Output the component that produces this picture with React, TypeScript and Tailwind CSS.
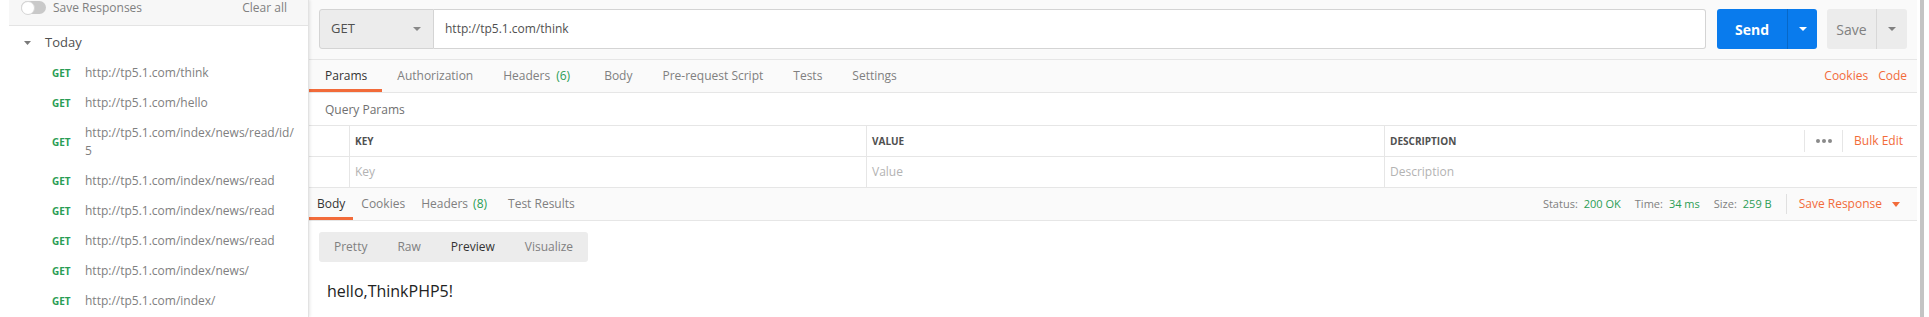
import React from "react";

const GREEN = "text-[#2a9d55]";

function Tri({ color = "#808080", w = 8, h = 4 }: { color?: string; w?: number; h?: number }) {
  return (
    <svg width={w} height={h} viewBox={`0 0 ${w} ${h}`} className="block">
      <polygon points={`0,0 ${w},0 ${w / 2},${h}`} fill={color} />
    </svg>
  );
}

function HistoryItem({ url, url2 }: { url: string; url2?: string }) {
  return (
    <div className="flex items-center pl-[43px] py-[6px]">
      <span className={`w-[33px] shrink-0 text-[10px] font-bold ${GREEN} leading-[18px]`}>GET</span>
      <span className="text-[12px] leading-[18px] text-[#808080]">
        {url}
        {url2 ? (
          <>
            <br />
            {url2}
          </>
        ) : null}
      </span>
    </div>
  );
}

export default function App() {
  return (
    <div className="flex h-[317px] w-[1929px] overflow-hidden bg-white font-['Open_Sans',sans-serif]">
      {/* Sidebar */}
      <aside className="relative z-10 w-[309px] shrink-0 border-r border-[#e2e2e2] bg-white pl-[9px] shadow-[1px_0_3px_rgba(0,0,0,0.10)]">
        <div className="flex h-[26px] items-center justify-between border-b border-[#e4e4e4] bg-[#f7f7f7] pb-[10px] pl-[12px] pr-[21px]">
          <div className="flex items-center">
            <div className="relative h-[13px] w-[25px] rounded-full bg-[#c9c9c9]">
              <div className="absolute left-0 top-[-0.5px] h-[14px] w-[14px] rounded-full border border-[#d6d6d6] bg-white" />
            </div>
            <span className="ml-[7px] text-[12px] leading-[16px] text-[#808080]">Save Responses</span>
          </div>
          <span className="text-[12px] leading-[16px] text-[#808080]">Clear all</span>
        </div>
        <div className="flex h-[32px] items-center pl-[15px] pt-[1px]">
          <Tri color="#7a7a7a" w={7} h={4} />
          <span className="ml-[14px] text-[13px] text-[#505050]">Today</span>
        </div>
        <HistoryItem url="http://tp5.1.com/think" />
        <HistoryItem url="http://tp5.1.com/hello" />
        <HistoryItem url="http://tp5.1.com/index/news/read/id/" url2="5" />
        <HistoryItem url="http://tp5.1.com/index/news/read" />
        <HistoryItem url="http://tp5.1.com/index/news/read" />
        <HistoryItem url="http://tp5.1.com/index/news/read" />
        <HistoryItem url="http://tp5.1.com/index/news/" />
        <HistoryItem url="http://tp5.1.com/index/" />
      </aside>

      {/* Main */}
      <main className="flex w-[1608px] shrink-0 flex-col bg-white">
        {/* Request bar */}
        <div className="flex h-[60px] items-start border-b border-[#e6e6e6] bg-[#fafafa] px-[10px] pt-[9px]">
          <div className="flex h-[40px] w-[115px] items-center justify-between rounded-l-[3px] border border-[#d4d4d4] bg-[#ececec] pl-[11px] pr-[12px]">
            <span className="text-[13px] text-[#505050]">GET</span>
            <Tri color="#888888" w={8} h={4} />
          </div>
          <div className="flex h-[40px] flex-1 items-center rounded-r-[3px] border border-l-0 border-[#d4d4d4] bg-white pl-[11px]">
            <span className="text-[12px] text-[#505050]">http://tp5.1.com/think</span>
          </div>
          <div className="ml-[11px] flex h-[40px] w-[100px] overflow-hidden rounded-[3px] bg-[#097bed]">
            <div className="flex w-[70px] items-center justify-center text-[14px] font-bold text-white">Send</div>
            <div className="flex w-[30px] items-center justify-center border-l border-[#0768c8]">
              <Tri color="#ffffff" w={8} h={4} />
            </div>
          </div>
          <div className="ml-[10px] flex h-[40px] w-[80px] overflow-hidden rounded-[3px] bg-[#ececec]">
            <div className="flex w-[49px] items-center justify-center text-[14px] text-[#808080]">Save</div>
            <div className="flex w-[31px] items-center justify-center border-l border-[#d8d8d8]">
              <Tri color="#808080" w={8} h={4} />
            </div>
          </div>
        </div>

        {/* Request tabs */}
        <div className="flex h-[33px] items-stretch justify-between border-b border-[#e6e6e6] bg-[#fafafa]">
          <div className="flex">
            <div className="relative flex items-center pl-[16px] pr-[15px] text-[12px] text-[#333333]">
              Params
              <div className="absolute bottom-0 left-0 right-0 h-[3px] bg-[#f26b3a]" />
            </div>
            <div className="flex items-center px-[15px] text-[12px] text-[#808080]">Authorization</div>
            <div className="flex items-center pl-[15px] pr-[19px] text-[12px] text-[#808080]">
              Headers<span className={`ml-[6px] ${GREEN}`}>(6)</span>
            </div>
            <div className="flex items-center px-[15px] text-[12px] text-[#808080]">Body</div>
            <div className="flex items-center px-[15px] text-[12px] text-[#808080]">Pre-request Script</div>
            <div className="flex items-center px-[15px] text-[12px] text-[#808080]">Tests</div>
            <div className="flex items-center px-[15px] text-[12px] text-[#808080]">Settings</div>
          </div>
          <div className="flex items-center pr-[10px] text-[12px] text-[#f26b3a]">
            <span>Cookies</span>
            <span className="ml-[10px]">Code</span>
          </div>
        </div>

        {/* Query Params */}
        <div className="flex h-[32px] items-center pl-[16px] pt-[2px] text-[12px] text-[#707070]">Query Params</div>

        {/* Table */}
        <div className="border-t border-[#e6e6e6]">
          <div className="flex h-[31px] border-b border-[#e6e6e6]">
            <div className="w-[40px] shrink-0" />
            <div className="flex w-[517px] shrink-0 items-center border-l border-[#e6e6e6] pl-[5px] text-[10px] font-bold text-[#505050]">KEY</div>
            <div className="flex w-[518px] shrink-0 items-center border-l border-[#e6e6e6] pl-[5px] text-[10px] font-bold text-[#505050]">VALUE</div>
            <div className="flex flex-1 items-center justify-between border-l border-[#e6e6e6] pl-[5px]">
              <span className="text-[10px] font-bold text-[#505050]">DESCRIPTION</span>
              <div className="flex items-center">
                <div className="h-[22px] w-px bg-[#e6e6e6]" />
                <div className="flex w-[37px] items-center justify-center gap-[2px]">
                  <span className="h-[4px] w-[4px] rounded-full bg-[#8a8a8a]" />
                  <span className="h-[4px] w-[4px] rounded-full bg-[#8a8a8a]" />
                  <span className="h-[4px] w-[4px] rounded-full bg-[#8a8a8a]" />
                </div>
                <div className="h-[22px] w-px bg-[#e6e6e6]" />
                <span className="ml-[11px] mr-[14px] text-[12px] text-[#f26b3a]">Bulk Edit</span>
              </div>
            </div>
          </div>
          <div className="flex h-[31px] border-b border-[#e6e6e6]">
            <div className="w-[40px] shrink-0" />
            <div className="flex w-[517px] shrink-0 items-center border-l border-[#e6e6e6] pl-[5px] text-[12px] text-[#b3b3b3]">Key</div>
            <div className="flex w-[518px] shrink-0 items-center border-l border-[#e6e6e6] pl-[5px] text-[12px] text-[#b3b3b3]">Value</div>
            <div className="flex flex-1 items-center border-l border-[#e6e6e6] pl-[5px] text-[12px] text-[#b3b3b3]">Description</div>
          </div>
        </div>

        {/* Response tabs */}
        <div className="flex h-[33px] items-stretch justify-between border-b border-[#e6e6e6] bg-[#fafafa]">
          <div className="flex">
            <div className="relative flex items-center px-[8px] text-[12px] text-[#333333]">
              Body
              <div className="absolute bottom-0 left-0 right-0 h-[3px] bg-[#f26b3a]" />
            </div>
            <div className="flex items-center px-[8px] text-[12px] text-[#808080]">Cookies</div>
            <div className="flex items-center px-[8px] text-[12px] text-[#808080]">
              Headers<span className={`ml-[5px] ${GREEN}`}>(8)</span>
            </div>
            <div className="ml-[5px] flex items-center px-[8px] text-[12px] text-[#808080]">Test Results</div>
          </div>
          <div className="flex items-center pr-[17px]">
            <span className="text-[11px] text-[#808080]">Status:</span>
            <span className={`ml-[6px] text-[11px] ${GREEN}`}>200 OK</span>
            <span className="ml-[14px] text-[11px] text-[#808080]">Time:</span>
            <span className={`ml-[6px] text-[11px] ${GREEN}`}>34 ms</span>
            <span className="ml-[14px] text-[11px] text-[#808080]">Size:</span>
            <span className={`ml-[6px] text-[11px] ${GREEN}`}>259 B</span>
            <div className="ml-[14px] h-[20px] w-px bg-[#e0e0e0]" />
            <span className="ml-[12px] text-[12px] text-[#f26b3a]">Save Response</span>
            <span className="ml-[10px]">
              <Tri color="#f26b3a" w={8} h={5} />
            </span>
          </div>
        </div>

        {/* Response body */}
        <div className="px-[10px] pt-[11px]">
          <div className="flex h-[30px] w-fit items-center rounded-[3px] bg-[#ececec]">
            <span className="px-[15px] text-[12px] text-[#808080]">Pretty</span>
            <span className="px-[15px] text-[12px] text-[#808080]">Raw</span>
            <span className="px-[15px] text-[12px] text-[#333333]">Preview</span>
            <span className="px-[15px] text-[12px] text-[#808080]">Visualize</span>
          </div>
          <div className="mt-[17px] pl-[8px] text-[16px] leading-[24px] text-[#222222]">hello,ThinkPHP5!</div>
        </div>
      </main>

      {/* Scrollbar area */}
      <div className="w-[3px] shrink-0 bg-white" />
      <div className="w-[4px] shrink-0 bg-[#c4c4c4]" />
      <div className="flex-1 bg-white" />
    </div>
  );
}
